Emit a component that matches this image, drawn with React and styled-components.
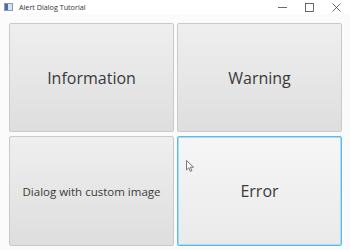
import React from "react";
import styled, { createGlobalStyle } from "styled-components";

const Global = createGlobalStyle`
  html, body {
    margin: 0;
    padding: 0;
    width: 350px;
    height: 250px;
    overflow: hidden;
    background: #ffffff;
    font-family: "Open Sans", "Noto Sans", sans-serif;
  }
`;

const Window = styled.div`
  width: 350px;
  height: 250px;
  display: flex;
  flex-direction: column;
  position: relative;
  background: #fbfbfb;
`;

const TitleBar = styled.div`
  height: 14px;
  display: flex;
  align-items: center;
  background: #ffffff;
  padding-left: 4px;
  gap: 6px;
`;

const AppIcon = styled.div`
  width: 7px;
  height: 6px;
  border: 1px solid #8a9bb0;
  background: linear-gradient(90deg, #4a6fa5 0 40%, #d8e2ee 40%);
`;

const Title = styled.span`
  font-size: 7.2px;
  color: #333;
  flex: 1;
`;

const Controls = styled.div`
  display: flex;
  align-items: center;
  height: 100%;
`;

const Control = styled.div`
  width: 27px;
  height: 14px;
  display: flex;
  align-items: center;
  justify-content: center;
`;

const Grid = styled.div`
  flex: 1;
  display: grid;
  grid-template-columns: 165px 165px;
  grid-template-rows: 109px 110px;
  column-gap: 3px;
  row-gap: 4px;
  padding: 9px 0 0 9px;
`;

const Button = styled.button`
  font-family: "Open Sans", "Noto Sans", sans-serif;
  font-size: ${(p) => p.size || 16}px;
  color: #3a3a3a;
  border: 1px solid ${(p) => (p.focused ? "#5bbde6" : "#c9c9c9")};
  box-shadow: ${(p) => (p.focused ? "inset 0 0 0 1px #a9dcf2" : "none")};
  border-radius: 2px;
  background: ${(p) =>
    p.focused
      ? "linear-gradient(#f6f6f7, #eaeaeb)"
      : "linear-gradient(#efefef, #dedede)"};
  padding: 0;
  margin: 0;
  display: flex;
  align-items: center;
  justify-content: center;
`;

const Cursor = styled.svg`
  position: absolute;
  left: 186px;
  top: 160px;
`;

export default function App() {
  return (
    <>
      <Global />
      <Window>
        <TitleBar>
          <AppIcon />
          <Title>Alert Dialog Tutorial</Title>
          <Controls>
            <Control>
              <svg width="9" height="9" viewBox="0 0 9 9">
                <path d="M0 4.5h9" stroke="#444" strokeWidth="0.8" />
              </svg>
            </Control>
            <Control>
              <svg width="9" height="9" viewBox="0 0 9 9">
                <rect x="0.5" y="0.5" width="8" height="8" fill="none" stroke="#444" strokeWidth="0.8" />
              </svg>
            </Control>
            <Control>
              <svg width="9" height="9" viewBox="0 0 9 9">
                <path d="M0.5 0.5l8 8M8.5 0.5l-8 8" stroke="#444" strokeWidth="0.8" />
              </svg>
            </Control>
          </Controls>
        </TitleBar>
        <Grid>
          <Button>Information</Button>
          <Button>Warning</Button>
          <Button size={11.5}>Dialog with custom image</Button>
          <Button focused>Error</Button>
        </Grid>
        <Cursor width="8" height="12" viewBox="0 0 8 12">
          <path d="M0.5 0.5v9.5l2.3-2.2 1.6 3.6 1.5-0.7-1.6-3.5h3.2z" fill="#fff" stroke="#555" strokeWidth="0.8" />
        </Cursor>
      </Window>
    </>
  );
}
